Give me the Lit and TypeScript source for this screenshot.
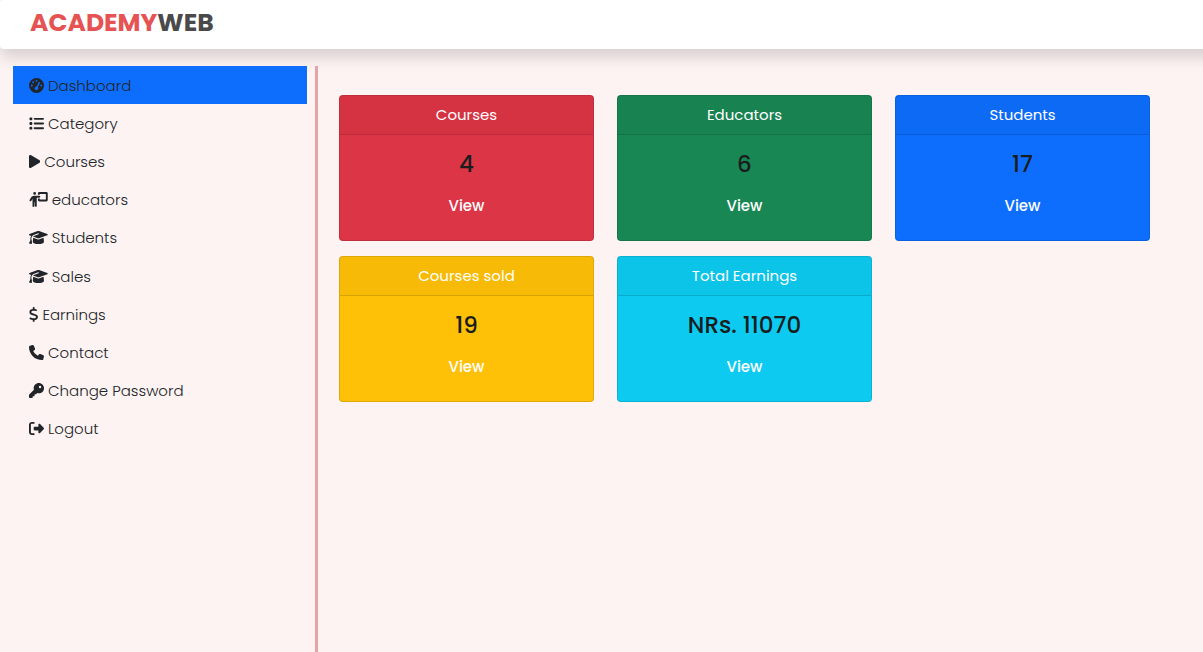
import { LitElement, html, css, svg } from "lit";
import { customElement, property } from "lit/decorators.js";
import { classMap } from "lit/directives/class-map.js";

interface Icon {
  width: number;
  shape: unknown;
}

const icons: Record<string, Icon> = {
  gauge: {
    width: 512,
    shape: svg`<path fill-rule="evenodd" d="M0 256a256 256 0 1 1 512 0A256 256 0 1 1 0 256zM288 96a32 32 0 1 0-64 0 32 32 0 1 0 64 0zM256 416c35.3 0 64-28.7 64-64 0-16.2-6-31.1-16-42.3l69.5-138.9c5.9-11.9 1.1-26.3-10.7-32.2s-26.3-1.1-32.2 10.7L261.1 288.2c-1.7-.1-3.4-.2-5.1-.2-35.3 0-64 28.7-64 64s28.7 64 64 64zM176 144a32 32 0 1 0-64 0 32 32 0 1 0 64 0zM96 288a32 32 0 1 0 0-64 32 32 0 1 0 0 64zm352-32a32 32 0 1 0-64 0 32 32 0 1 0 64 0z"/>`,
  },
  list: {
    width: 512,
    shape: svg`<path d="M40 48C26.7 48 16 58.7 16 72v48c0 13.3 10.7 24 24 24H88c13.3 0 24-10.7 24-24V72c0-13.3-10.7-24-24-24H40zM192 64c-17.7 0-32 14.3-32 32s14.3 32 32 32H480c17.7 0 32-14.3 32-32s-14.3-32-32-32H192zm0 160c-17.7 0-32 14.3-32 32s14.3 32 32 32H480c17.7 0 32-14.3 32-32s-14.3-32-32-32H192zm0 160c-17.7 0-32 14.3-32 32s14.3 32 32 32H480c17.7 0 32-14.3 32-32s-14.3-32-32-32H192zM16 232v48c0 13.3 10.7 24 24 24H88c13.3 0 24-10.7 24-24V232c0-13.3-10.7-24-24-24H40c-13.3 0-24 10.7-24 24zM40 368c-13.3 0-24 10.7-24 24v48c0 13.3 10.7 24 24 24H88c13.3 0 24-10.7 24-24V392c0-13.3-10.7-24-24-24H40z"/>`,
  },
  play: {
    width: 384,
    shape: svg`<path d="M73 39c-14.8-9.1-33.4-9.4-48.5-.9S0 62.6 0 80V432c0 17.4 9.4 33.4 24.5 41.9s33.7 8.1 48.5-.9L361 297c14.3-8.7 23-24.2 23-41s-8.7-32.2-23-41L73 39z"/>`,
  },
  teacher: {
    width: 640,
    shape: svg`<path d="M192 96a48 48 0 1 0 0-96 48 48 0 1 0 0 96zM184 352h16v128c0 17.7 14.3 32 32 32s32-14.3 32-32V192h88c17.7 0 32-14.3 32-32s-14.3-32-32-32H179.300c-44.900 0-86.500 23.600-109.700 62.100L20.600 271.500c-9.100 15.100-4.200 34.800 10.900 43.900s34.800 4.200 43.900-10.900L120 230.400V480c0 17.700 14.300 32 32 32s32-14.300 32-32V352zM304 48v48h64V64H576V256H368V224H304v48c0 26.500 21.500 48 48 48H592c26.500 0 48-21.500 48-48V48c0-26.500-21.500-48-48-48H352c-26.500 0-48 21.500-48 48z"/>`,
  },
  cap: {
    width: 640,
    shape: svg`<path d="M320 32c-8.1 0-16.1 1.4-23.7 4.1L15.8 137.4C6.3 140.9 0 149.9 0 160s6.3 19.1 15.8 22.6l57.9 20.9C57.3 229.3 48 259.8 48 291.9v28.1c0 28.4-10.8 57.7-22.3 80.8c-6.5 13-13.9 25.8-22.5 37.6C0 442.7-.9 448.3 .9 453.4s6 8.9 11.2 10.2l64 16c4.2 1.1 8.7 .3 12.4-2s6.3-6.1 7.1-10.4c8.6-42.8 4.3-81.2-2.1-108.7C90.3 344.3 86 329.8 80 316.5V291.9c0-30.2 10.2-58.7 27.9-81.5c12.9-15.5 29.6-28 49.2-35.7l157-61.7c8.2-3.2 17.5 .8 20.7 9s-.8 17.5-9 20.7l-157 61.7c-12.4 4.9-23.3 12.4-32.2 21.6l159.6 57.6c7.6 2.7 15.6 4.1 23.7 4.1s16.1-1.4 23.7-4.1L624.2 182.6c9.5-3.4 15.8-12.5 15.8-22.6s-6.3-19.1-15.8-22.6L343.7 36.1C336.1 33.4 328.1 32 320 32zM128 408c0 35.3 86 72 192 72s192-36.7 192-72L496.7 262.6 354.5 314c-11.1 4-22.8 6-34.5 6s-23.5-2-34.5-6L143.3 262.6 128 408z"/>`,
  },
  dollar: {
    width: 320,
    shape: svg`<path d="M160 0c17.7 0 32 14.3 32 32V67.7c1.6 .2 3.1 .4 4.7 .7c.4 .1 .7 .1 1.1 .2l48 8.8c17.4 3.2 28.9 19.9 25.7 37.2s-19.9 28.9-37.2 25.7l-47.5-8.7c-31.3-4.6-58.9-1.5-78.3 6.2s-27.2 18.3-29 28.1c-2 10.7-.5 16.7 1.2 20.4c1.8 3.9 5.5 8.3 12.8 13.2c16.3 10.7 41.3 17.7 73.7 26.3l2.9 .8c28.6 7.6 63.6 16.8 89.6 33.8c14.2 9.3 27.6 21.9 35.9 39.5c8.5 17.9 10.3 37.9 6.4 59.2c-6.9 38-33.1 63.4-65.6 76.7c-13.7 5.6-28.6 9.2-44.4 11V480c0 17.7-14.3 32-32 32s-32-14.3-32-32V445.1c-.4-.1-.9-.1-1.3-.2l-.2 0c-24.4-3.8-64.5-14.3-91.5-26.3c-16.1-7.2-23.4-26.1-16.2-42.2s26.1-23.4 42.2-16.2c20.9 9.3 55.3 18.5 75.2 21.6c31.9 4.7 58.2 2 76-5.3c16.9-6.9 24.6-16.9 26.8-28.9c1.9-10.6 .4-16.7-1.3-20.4c-1.9-4-5.6-8.4-13-13.3c-16.4-10.7-41.5-17.7-74-26.3l-2.8-.7C119.4 279.3 84.4 270 58.4 253c-14.2-9.3-27.5-22-35.8-39.6c-8.4-17.9-10.1-37.9-6.1-59.2C23.7 116 52.3 91.2 84.8 78.3c13.3-5.3 27.9-8.9 43.2-11V32c0-17.7 14.3-32 32-32z"/>`,
  },
  phone: {
    width: 512,
    shape: svg`<path d="M164.9 24.6c-7.7-18.6-28-28.5-47.4-23.2l-88 24C12.1 30.2 0 46 0 64C0 311.4 200.6 512 448 512c18 0 33.8-12.1 38.6-29.5l24-88c5.3-19.4-4.6-39.7-23.2-47.4l-96-40c-16.3-6.8-35.2-2.1-46.3 11.6L304.7 368C234.3 334.7 177.3 277.7 144 207.3L193.3 167c13.7-11.2 18.4-30 11.6-46.3l-40-96z"/>`,
  },
  key: {
    width: 512,
    shape: svg`<path fill-rule="evenodd" d="M336 352c97.2 0 176-78.8 176-176S433.2 0 336 0S160 78.8 160 176c0 18.7 2.9 36.8 8.3 53.7L7 391c-4.5 4.5-7 10.6-7 17v80c0 13.3 10.7 24 24 24h80c13.3 0 24-10.7 24-24V448h40c13.3 0 24-10.7 24-24V384h40c6.4 0 12.5-2.5 17-7l33.3-33.3c16.9 5.4 35 8.3 53.7 8.3zM376 96a40 40 0 1 1 0 80 40 40 0 1 1 0-80z"/>`,
  },
  exit: {
    width: 512,
    shape: svg`<path d="M377.9 105.9L500.7 228.7c7.2 7.2 11.3 17.1 11.3 27.3s-4.1 20.1-11.3 27.3L377.9 406.1c-6.4 6.4-15 9.9-24 9.9c-18.7 0-33.9-15.2-33.9-33.9l0-62.1-128 0c-17.7 0-32-14.3-32-32l0-64c0-17.7 14.3-32 32-32l128 0 0-62.1c0-18.7 15.2-33.9 33.9-33.9c9 0 17.6 3.6 24 9.9zM160 96L96 96c-17.7 0-32 14.3-32 32l0 256c0 17.7 14.3 32 32 32l64 0c17.7 0 32 14.3 32 32s-14.3 32-32 32l-64 0c-53 0-96-43-96-96L0 128C0 75 43 32 96 32l64 0c17.7 0 32 14.3 32 32s-14.3 32-32 32z"/>`,
  },
};

const links = [
  { icon: "gauge", label: "Dashboard", active: true },
  { icon: "list", label: "Category" },
  { icon: "play", label: "Courses" },
  { icon: "teacher", label: "educators" },
  { icon: "cap", label: "Students" },
  { icon: "cap", label: "Sales" },
  { icon: "dollar", label: "Earnings" },
  { icon: "phone", label: "Contact" },
  { icon: "key", label: "Change Password" },
  { icon: "exit", label: "Logout" },
];

const stats = [
  { title: "Courses", value: "4", tone: "danger" },
  { title: "Educators", value: "6", tone: "success" },
  { title: "Students", value: "17", tone: "primary" },
  { title: "Courses sold", value: "19", tone: "warning" },
  { title: "Total Earnings", value: "NRs. 11070", tone: "info" },
];

@customElement("stat-card")
class StatCard extends LitElement {
  @property() heading = "";
  @property() value = "";
  @property() tone = "primary";

  static styles = css`
    :host {
      display: block;
    }
    .card {
      border: 1px solid rgba(0, 0, 0, 0.125);
      border-radius: 4px;
      text-align: center;
      color: #fff;
      font-size: 15px;
      line-height: 24px;
    }
    .danger { background: #dc3545; }
    .success { background: #198754; }
    .primary { background: #0d6efd; }
    .warning { background: #ffc107; }
    .info { background: #0dcaf0; }
    .title {
      padding: 7px 16px;
      background: rgba(0, 0, 0, 0.03);
      border-bottom: 1px solid rgba(0, 0, 0, 0.125);
    }
    .body {
      padding: 15px 16px 22px;
    }
    .value {
      margin: 0 0 16px;
      font-size: 23px;
      line-height: 28px;
      font-weight: 500;
      color: #1a1d20;
    }
    .view {
      color: #fff;
      font-weight: 500;
      text-decoration: none;
    }
  `;

  render() {
    return html`
      <article class=${classMap({ card: true, [this.tone]: true })}>
        <div class="title">${this.heading}</div>
        <div class="body">
          <h2 class="value">${this.value}</h2>
          <a class="view" href="#">View</a>
        </div>
      </article>
    `;
  }
}

@customElement("app-root")
class AppRoot extends LitElement {
  static styles = css`
    :host {
      display: flex;
      flex-direction: column;
      min-height: 100vh;
      overflow: hidden;
      background: #fcf3f2;
      color: #212529;
      font-family: Poppins, Inter, sans-serif;
      font-size: 15px;
    }
    .top {
      margin-right: -24px;
      padding: 4px 30px 7px;
      background: #fff;
      border-radius: 4px;
      box-shadow: 0 8px 16px rgba(0, 0, 0, 0.15);
    }
    .brand {
      color: #4a4a4a;
      font-size: 25px;
      line-height: 38px;
      font-weight: 700;
      text-decoration: none;
    }
    .accent {
      color: #e55353;
    }
    .layout {
      flex: 1;
      display: flex;
      padding: 17px 53px 0 13px;
    }
    .side {
      flex: 0 0 294px;
      padding-right: 8px;
      border-right: 3px solid #e5a5a7;
    }
    .menu {
      display: grid;
      grid-auto-rows: 1fr;
      min-height: 382px;
      margin: 0;
      padding: 0;
      list-style: none;
    }
    .item {
      display: grid;
    }
    .link {
      display: flex;
      align-items: center;
      gap: 4px;
      padding: 0 16px;
      color: inherit;
      font-weight: 300;
      text-decoration: none;
    }
    .active {
      background: #0d6efd;
    }
    .icon {
      height: 15px;
      fill: currentColor;
    }
    .cards {
      flex: 1;
      display: grid;
      grid-template-columns: repeat(3, 1fr);
      align-content: start;
      gap: 15px 23px;
      padding: 29px 0 0 21px;
    }
  `;

  render() {
    return html`
      <header class="top">
        <a class="brand" href="#"><span class="accent">ACADEMY</span>WEB</a>
      </header>
      <div class="layout">
        <nav class="side">
          <ul class="menu">
            ${links.map(
              (l) => html`<li class="item">
                <a class=${classMap({ link: true, active: !!l.active })} href="#">
                  <svg class="icon" viewBox="0 0 ${icons[l.icon].width} 512" aria-hidden="true">${icons[l.icon].shape}</svg>
                  <span>${l.label}</span>
                </a>
              </li>`
            )}
          </ul>
        </nav>
        <main class="cards">
          ${stats.map(
            (s) => html`<stat-card .heading=${s.title} .value=${s.value} .tone=${s.tone}></stat-card>`
          )}
        </main>
      </div>
    `;
  }
}
